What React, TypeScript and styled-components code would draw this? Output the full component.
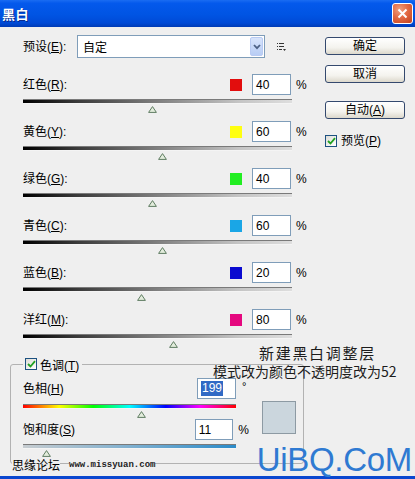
import React from 'react';
import styled, { createGlobalStyle } from 'styled-components';

const GlobalStyle = createGlobalStyle`
  html, body { margin: 0; padding: 0; background: #efefef; }
  body {
    font-family: "Liberation Sans", "Noto Sans CJK SC", sans-serif;
    font-size: 12px;
    color: #000;
  }
`;

const Window = styled.div`
  width: 415px;
  height: 479px;
  display: flex;
  flex-direction: column;
  overflow: hidden;
  background: #efefef;
`;

const TitleBar = styled.div`
  height: 27px;
  flex: none;
  box-sizing: border-box;
  display: flex;
  align-items: center;
  justify-content: space-between;
  padding: 0 2px 0 2px;
  background: linear-gradient(#1a6cf2 0%, #0459ec 12%, #0054e3 55%, #004ad6 85%, #003bb5 100%);
`;

const Title = styled.span`
  color: #fff;
  font-family: "Noto Sans CJK SC", sans-serif;
  font-weight: 700;
  font-size: 13px;
  line-height: 16px;
  letter-spacing: 0.5px;
  text-shadow: 1px 1px 0 #0b2a8c;
`;

const CloseButton = styled.div`
  width: 21px;
  height: 21px;
  box-sizing: border-box;
  border: 1px solid #fff;
  border-radius: 3px;
  background: radial-gradient(circle at 35% 30%, #f0a080 0%, #e36a44 45%, #c2401c 100%);
  display: flex;
  align-items: center;
  justify-content: center;
`;

const Body = styled.div`
  flex: 1;
  position: relative;
  display: flex;
  gap: 15px;
  padding-left: 10px;
  box-sizing: border-box;
  border-bottom: 3px solid #0a47cf;
`;

const LeftCol = styled.div`
  width: 300px;
  display: flex;
  flex-direction: column;
  padding-top: 8px;
`;

const PresetRow = styled.div`
  display: flex;
  align-items: center;
  height: 23px;
  padding-left: 13px;
`;

const PresetLabel = styled.span`
  width: 54px;
  line-height: 14px;
`;

const Select = styled.div`
  width: 188px;
  height: 23px;
  box-sizing: border-box;
  border: 1px solid #7f9db9;
  background: #fff;
  display: flex;
  align-items: center;
  justify-content: space-between;
  padding-left: 5px;
`;

const SelectText = styled.span`
  font-family: "Noto Sans CJK SC", sans-serif;
  line-height: 14px;
`;

const DropButton = styled.div`
  width: 13px;
  height: 19px;
  margin-right: 1px;
  box-sizing: border-box;
  border: 1px solid #b9cbf3;
  border-radius: 2px;
  background: linear-gradient(#d8e4fb, #b8cdf5);
  display: flex;
  align-items: center;
  justify-content: center;
`;

const MenuIcon = styled.svg`
  margin-left: 12px;
  margin-top: 1px;
`;

const Rows = styled.div`
  display: flex;
  flex-direction: column;
  gap: 8px;
  margin-top: 16px;
`;

const SliderBlock = styled.div`
  display: flex;
  flex-direction: column;
  padding-left: 13px;
`;

const TopLine = styled.div<{ $gap?: number }>`
  display: flex;
  align-items: center;
  height: 21px;
  margin-top: ${(p) => p.$gap ?? 0}px;
`;

const Label = styled.span<{ $w?: number }>`
  ${(p) => (p.$w ? `width: ${p.$w}px;` : 'flex: 1;')}
  line-height: 14px;
  white-space: nowrap;
`;

const Swatch = styled.div<{ $c: string }>`
  width: 12px;
  height: 12px;
  background: ${(p) => p.$c};
  margin-right: 10px;
`;

const Field = styled.div`
  width: 39px;
  height: 21px;
  box-sizing: border-box;
  border: 1px solid #7f9db9;
  background: #fff;
  display: flex;
  align-items: center;
  padding-left: 3px;
  font-size: 12px;
`;

const Selected = styled.span`
  background: #316ac5;
  color: #fff;
  line-height: 15px;
  padding: 0 1px;
`;

const Unit = styled.span`
  margin-left: 5px;
  width: 14px;
  line-height: 14px;
`;

const Degree = styled.span`
  margin-left: 6px;
  margin-top: -6px;
  font-size: 11px;
`;

const Bar = styled.div<{ $w: number; $bg: string; $gap: number }>`
  width: ${(p) => p.$w}px;
  height: 5px;
  margin-top: ${(p) => p.$gap}px;
  box-sizing: border-box;
  border-top: 1px solid #7a7a7a;
  border-bottom: 1px solid #f4f4f4;
  background: ${(p) => p.$bg};
`;

const Track = styled.div<{ $w: number; $gap: number }>`
  position: relative;
  width: ${(p) => p.$w}px;
  height: 7px;
  margin-top: ${(p) => p.$gap}px;
`;

const ThumbSvg = styled.svg`
  position: absolute;
  top: 0;
  display: block;
`;

const Group = styled.fieldset`
  margin: 9px 0 0 0;
  width: 294px;
  box-sizing: border-box;
  border: 1px solid #b2b2b2;
  border-radius: 3px;
  padding: 0 0 6px 12px;
  min-width: 0;
`;

const Legend = styled.legend`
  padding: 0 3px 0 2px;
  height: 14px;
  display: flex;
  align-items: center;
  gap: 3px;
`;

const GroupBody = styled.div`
  display: flex;
  align-items: center;
  margin-top: 7px;
`;

const TintCol = styled.div`
  width: 229px;
  display: flex;
  flex-direction: column;
`;

const Preview = styled.div`
  width: 34px;
  height: 33px;
  margin-left: 10px;
  box-sizing: border-box;
  border: 1px solid #8d9aa3;
  background: #cbd6dd;
`;

const RightCol = styled.div`
  width: 80px;
  display: flex;
  flex-direction: column;
  padding-top: 10px;
`;

const Button = styled.div<{ $gap: number }>`
  height: 18px;
  margin-top: ${(p) => p.$gap}px;
  box-sizing: border-box;
  border: 1px solid #34496e;
  border-radius: 3px;
  background: linear-gradient(#ffffff 0%, #f4f3ee 60%, #dcd8cc 100%);
  display: flex;
  align-items: center;
  justify-content: center;
  line-height: 14px;
`;

const CheckRow = styled.div`
  display: flex;
  align-items: center;
  gap: 4px;
  margin-top: 15px;
  line-height: 14px;
`;

const CheckBox = styled.div`
  width: 12px;
  height: 12px;
  box-sizing: border-box;
  border: 1px solid #1c5180;
  background: linear-gradient(135deg, #dcdcd6, #fff);
  display: flex;
  align-items: center;
  justify-content: center;
`;

const U = styled.span`
  text-decoration: underline;
`;

const Annotation = styled.div`
  position: absolute;
  left: 213px;
  top: 317px;
  font-family: "Noto Sans CJK SC", sans-serif;
  color: #1c1c1c;
`;

const AnnoLine = styled.div<{ $size: number; $indent: number; $spacing: number }>`
  font-size: ${(p) => p.$size}px;
  line-height: 18px;
  padding-left: ${(p) => p.$indent}px;
  letter-spacing: ${(p) => p.$spacing}px;
  white-space: nowrap;
`;

const SiteMark = styled.div`
  position: absolute;
  left: 12px;
  top: 431px;
  display: flex;
  align-items: center;
  gap: 9px;
`;

const SiteName = styled.span`
  font-family: "Noto Sans CJK SC", sans-serif;
  font-size: 12px;
  line-height: 14px;
  background: #efefef;
`;

const SiteUrl = styled.span`
  font-family: "Liberation Mono", monospace;
  font-size: 9px;
  font-weight: 700;
  line-height: 10px;
  background: #efefef;
  color: #222;
`;

const BigMark = styled.div`
  position: absolute;
  right: 3px;
  bottom: -2px;
  font-family: "Liberation Sans", sans-serif;
  font-size: 33px;
  line-height: 36px;
  color: #2f7ad2;
  letter-spacing: -0.3px;
`;

const Thumb = ({ left }: { left: number }) => (
  <ThumbSvg width="9" height="7" viewBox="0 0 9 7" style={{ left: `${left - 4.5}px` }}>
    <polygon points="4.5,0.6 8.4,6.4 0.6,6.4" fill="#e2ecdc" stroke="#5f7d62" strokeWidth="1" />
  </ThumbSvg>
);

const Check = () => (
  <svg width="9" height="8" viewBox="0 0 9 8">
    <path d="M1 4 L3.5 6.5 L8 1.2" fill="none" stroke="#21a121" strokeWidth="1.8" />
  </svg>
);

const GRAY = 'linear-gradient(to right, #000 0%, #3a3a3a 20%, #8a8a8a 55%, #c4c4c4 80%, #dedede 100%)';
const HUE =
  'linear-gradient(to right, #ff0000 0%, #ffff00 17%, #00ff00 33%, #00ffff 50%, #0000ff 67%, #ff00ff 83%, #ff0000 100%)';
const SAT = 'linear-gradient(to right, #c6ccd0 0%, #7fb0d0 50%, #2b8bc9 100%)';

const channels = [
  { name: '红色', key: 'R', color: '#e20d0d', value: 40 },
  { name: '黄色', key: 'Y', color: '#ffff10', value: 60 },
  { name: '绿色', key: 'G', color: '#22ee22', value: 40 },
  { name: '青色', key: 'C', color: '#1aa6e6', value: 60 },
  { name: '蓝色', key: 'B', color: '#0a0ad0', value: 20 },
  { name: '洋红', key: 'M', color: '#e5087f', value: 80 },
];

const BAR_W = 269;
const TINT_W = 213;

export default function App() {
  return (
    <>
      <GlobalStyle />
      <Window>
        <TitleBar>
          <Title>黑白</Title>
          <CloseButton>
            <svg width="11" height="11" viewBox="0 0 11 11">
              <path d="M1.5 1.5 L9.5 9.5 M9.5 1.5 L1.5 9.5" stroke="#fff" strokeWidth="2" />
            </svg>
          </CloseButton>
        </TitleBar>
        <Body>
          <LeftCol>
            <PresetRow>
              <PresetLabel>
                预设(<U>E</U>):
              </PresetLabel>
              <Select>
                <SelectText>自定</SelectText>
                <DropButton>
                  <svg width="8" height="6" viewBox="0 0 8 6">
                    <path d="M1 1 L4 4.2 L7 1" fill="none" stroke="#4d6185" strokeWidth="1.8" />
                  </svg>
                </DropButton>
              </Select>
              <MenuIcon width="9" height="8" viewBox="0 0 9 8">
                <rect x="0" y="0" width="1" height="1" fill="#333" />
                <rect x="2" y="0" width="5" height="1" fill="#333" />
                <rect x="0" y="3" width="1" height="1" fill="#333" />
                <rect x="2" y="3" width="5" height="1" fill="#333" />
                <rect x="0" y="6" width="1" height="1" fill="#333" />
                <rect x="2" y="6" width="3" height="1" fill="#333" />
                <polygon points="6,6 9,6 7.5,8" fill="#333" />
              </MenuIcon>
            </PresetRow>
            <Rows>
              {channels.map((c) => (
                <SliderBlock key={c.key}>
                  <TopLine>
                    <Label>
                      {c.name}(<U>{c.key}</U>):
                    </Label>
                    <Swatch $c={c.color} />
                    <Field>{c.value}</Field>
                    <Unit>%</Unit>
                  </TopLine>
                  <Bar $w={BAR_W} $bg={GRAY} $gap={4} />
                  <Track $w={BAR_W} $gap={2}>
                    <Thumb left={((c.value + 200) / 500) * BAR_W} />
                  </Track>
                </SliderBlock>
              ))}
            </Rows>
            <Group>
              <Legend>
                <CheckBox>
                  <Check />
                </CheckBox>
                <span>
                  色调(<U>T</U>)
                </span>
              </Legend>
              <GroupBody>
                <TintCol>
                  <TopLine>
                    <Label $w={174}>
                      色相(<U>H</U>)
                    </Label>
                    <Field>
                      <Selected>199</Selected>
                    </Field>
                    <Degree>°</Degree>
                  </TopLine>
                  <Bar $w={TINT_W} $bg={HUE} $gap={5} />
                  <Track $w={TINT_W} $gap={2}>
                    <Thumb left={(199 / 360) * TINT_W + 1} />
                  </Track>
                  <TopLine $gap={1}>
                    <Label $w={174}>
                      饱和度(<U>S</U>)
                    </Label>
                    <Field>11</Field>
                    <Unit>%</Unit>
                  </TopLine>
                  <Bar $w={TINT_W} $bg={SAT} $gap={4} />
                  <Track $w={TINT_W} $gap={1}>
                    <Thumb left={(11 / 100) * TINT_W} />
                  </Track>
                </TintCol>
                <Preview />
              </GroupBody>
            </Group>
          </LeftCol>
          <RightCol>
            <Button $gap={0}>确定</Button>
            <Button $gap={10}>取消</Button>
            <Button $gap={18}>
              自动(<U>A</U>)
            </Button>
            <CheckRow>
              <CheckBox>
                <Check />
              </CheckBox>
              <span>
                预览(<U>P</U>)
              </span>
            </CheckRow>
          </RightCol>
          <Annotation>
            <AnnoLine $size={15} $indent={46} $spacing={1.7}>
              新建黑白调整层
            </AnnoLine>
            <AnnoLine $size={14} $indent={0} $spacing={0}>
              模式改为颜色不透明度改为52
            </AnnoLine>
          </Annotation>
          <SiteMark>
            <SiteName>思缘论坛</SiteName>
            <SiteUrl>www.missyuan.com</SiteUrl>
          </SiteMark>
          <BigMark>UiBQ.CoM</BigMark>
        </Body>
      </Window>
    </>
  );
}
